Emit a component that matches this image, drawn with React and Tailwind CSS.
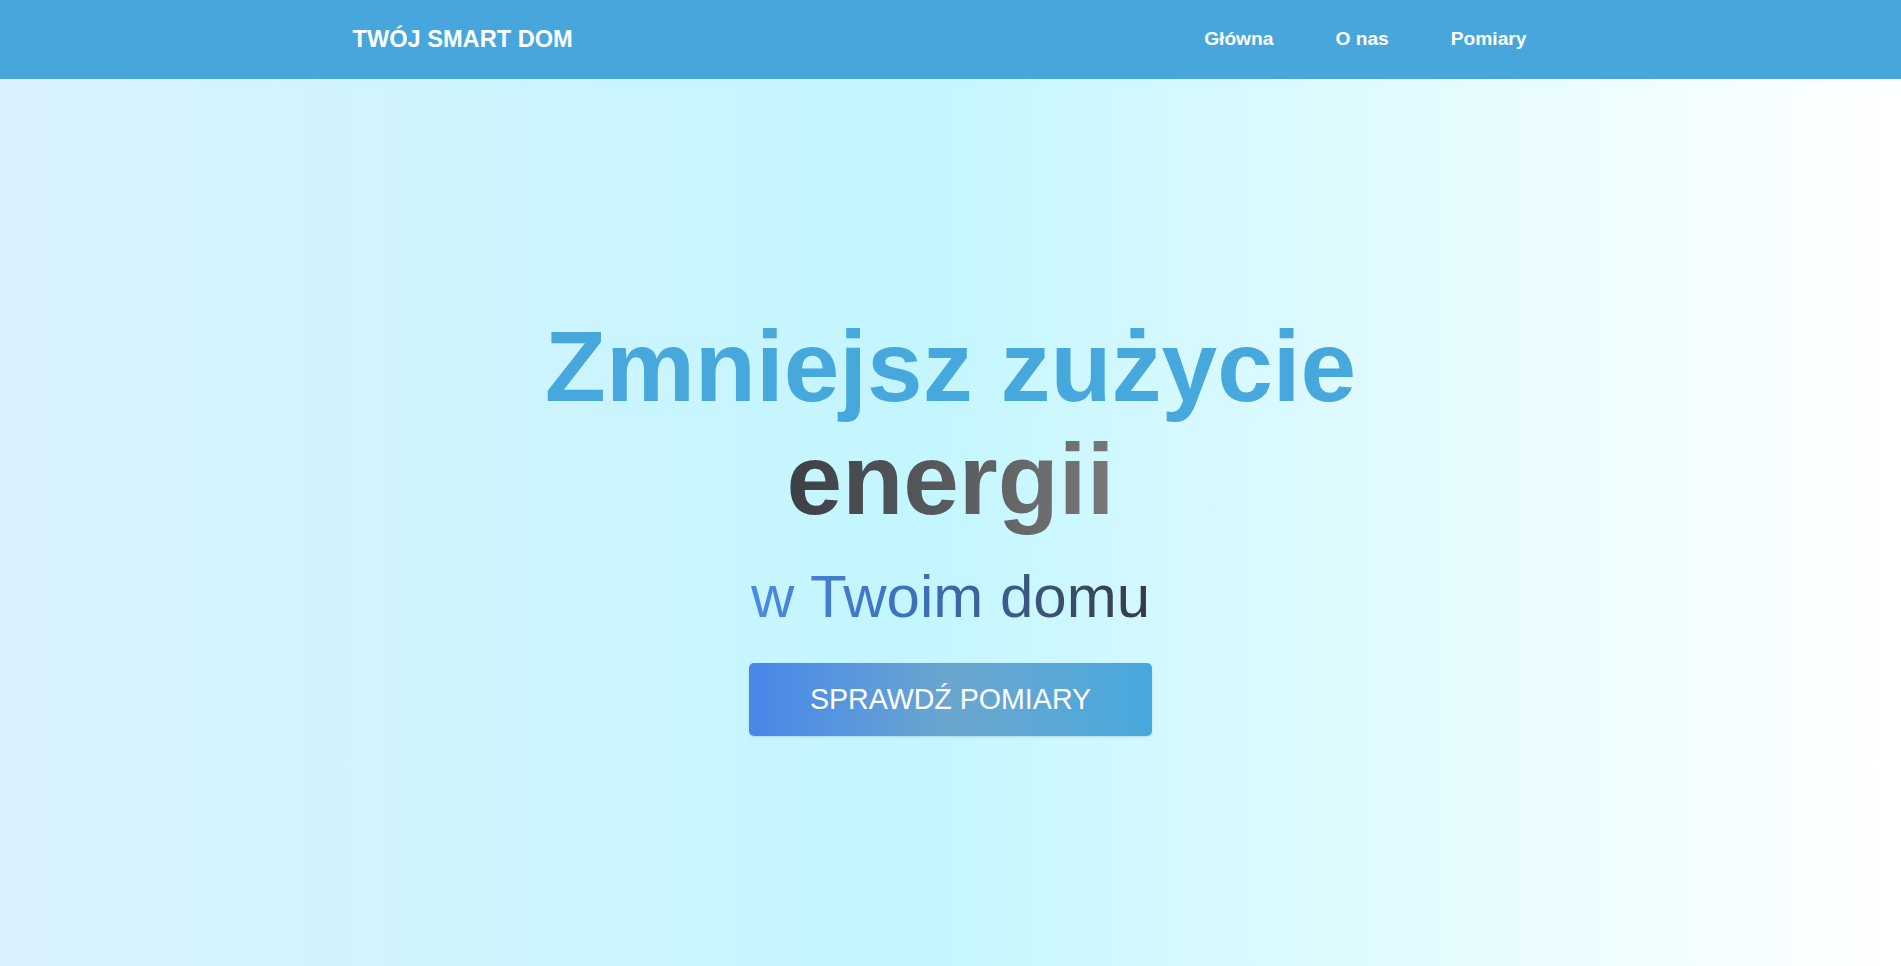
import React from 'react';

const links = ['Główna', 'O nas', 'Pomiary'];

const App = () => {
    return (
        <div className="min-h-screen bg-gradient-to-r from-[#daf2fe] via-[#c3f6fe] via-48% to-white font-['Liberation_Sans',Arial,sans-serif]">
            {/* Navbar */}
            <nav className="h-[79px] bg-[#47a7dc]">
                <div className="w-[1196px] h-full mx-auto flex items-center justify-between">
                    <a href="#" className="text-[23.6px] font-bold text-white">
                        TWÓJ SMART DOM
                    </a>
                    <ul className="flex items-center gap-[62px] pr-[22px]">
                        {links.map((link) => (
                            <li key={link}>
                                <a href="#" className="text-[19.2px] font-bold text-white">
                                    {link}
                                </a>
                            </li>
                        ))}
                    </ul>
                </div>
            </nav>

            {/* Hero */}
            <main className="h-[887px] flex flex-col items-center justify-center text-center">
                <h1 className="text-[100px] leading-[113.5px] font-bold text-[#46a8dc]">
                    Zmniejsz zużycie
                    <br />
                    <span className="inline-block bg-gradient-to-r from-[#3c4046] to-[#787878] bg-clip-text text-transparent">
                        energii
                    </span>
                </h1>
                <p className="mt-[25px] text-[60px] leading-[69px]">
                    <span className="inline-block bg-gradient-to-r from-[#4a8be8] via-[#3b6db5] via-45% to-[#363a40] bg-clip-text text-transparent">
                        w Twoim domu
                    </span>
                </p>
                <button className="mt-[32px] w-[403px] h-[73px] rounded-[5px] bg-gradient-to-r from-[#4886ea] via-[#6aa6cf] to-[#47a8de] text-white text-[28.6px] leading-[33px] shadow-sm">
                    SPRAWDŹ POMIARY
                </button>
            </main>
        </div>
    );
};

export default App;
